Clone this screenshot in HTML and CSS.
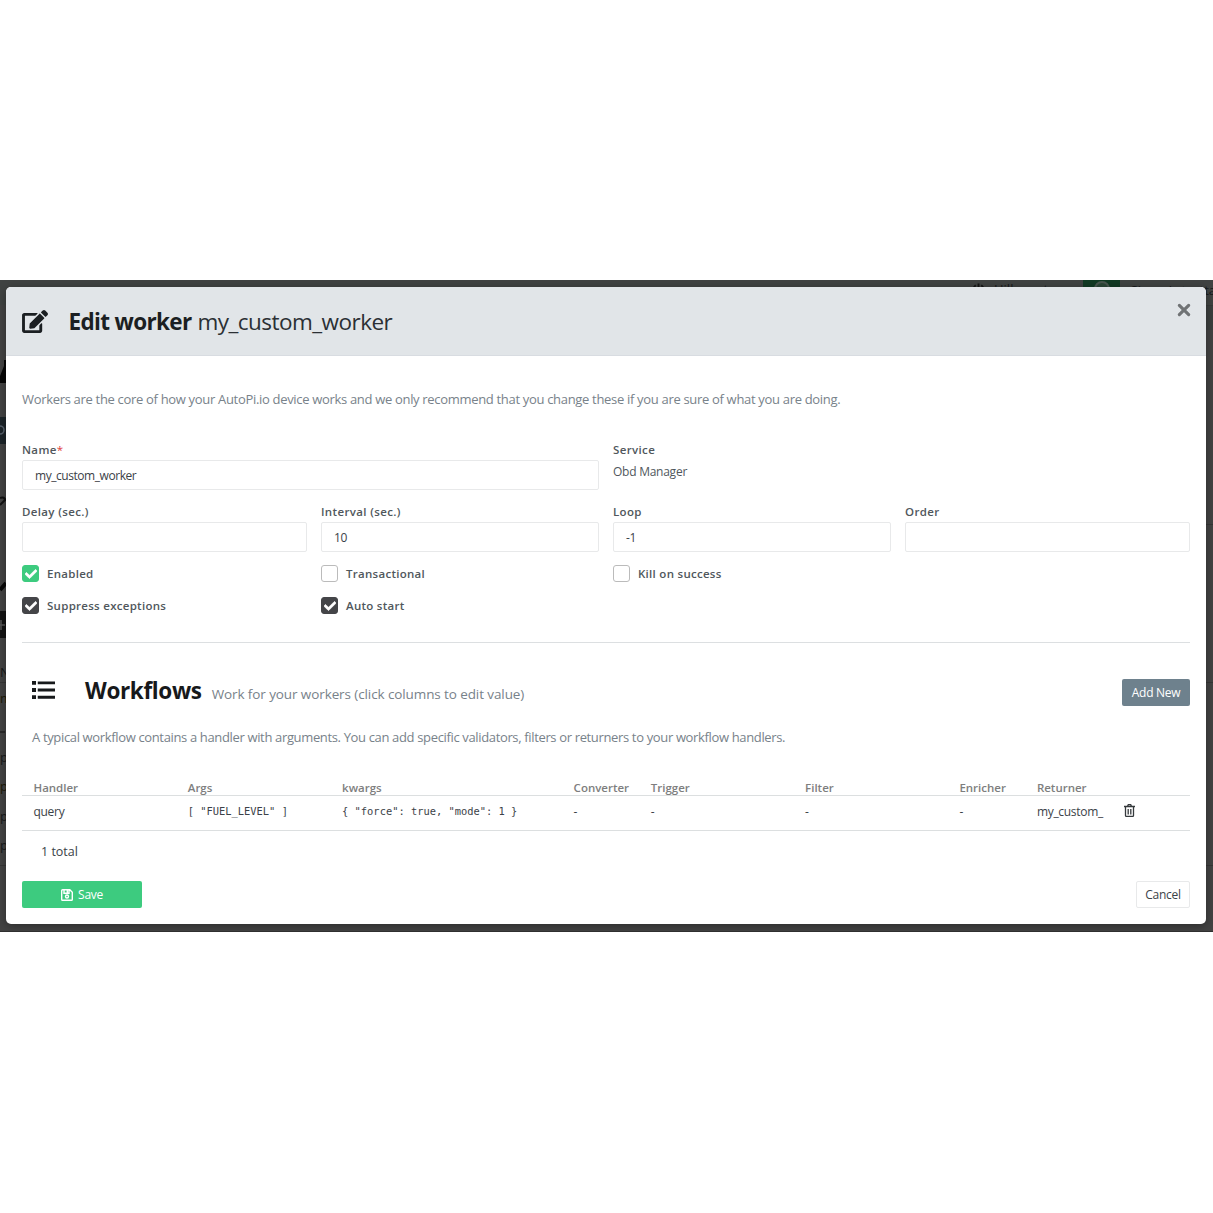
FILE: index.html
```html
<!DOCTYPE html>
<html lang="en">
<head>
<meta charset="utf-8">
<title>Edit worker</title>
<link rel="stylesheet" href="styles.css">
</head>
<body>
<div class="screen">
  <div class="backdrop" aria-hidden="true">
    <div class="bg-top"></div>
    <div class="bg-strip"></div>
    <svg class="bg-power" viewBox="0 0 14 14"><path d="M4 2.5a5.3 5.3 0 1 0 6 0M7 0.5v6" fill="none" stroke="currentColor" stroke-width="2"/></svg>
    <span class="bg-text bg-user">Hilkemet</span>
    <div class="bg-avatar"><i></i></div>
    <span class="bg-text bg-device">Simon's testta</span>
    <div class="bg-line bg-line-1"></div>
    <div class="bg-line bg-line-2"></div>
    <div class="bg-line bg-line-3"></div>
    <svg class="bg-left" viewBox="0 0 6 652">
      <path d="M6 80v23H0v-7l4-10V80z" fill="#050505"/>
      <path d="M0 137h6v27H0z" fill="#1c2429"/>
      <circle cx="0" cy="150" r="4" fill="none" stroke="#56606a" stroke-width="1.6"/>
      <path d="M0 218q4-2 6 3M0 225l5-5" fill="none" stroke="#111" stroke-width="2"/>
      <path d="M0 310l6-7" stroke="#080808" stroke-width="4"/>
      <path d="M0 331h6v27H0z" fill="#131313"/>
      <path d="M0 345h5M1 340v10" stroke="#555" stroke-width="1.5"/>
      <path d="M0 452h5" stroke="#111"/>
    </svg>
    <span class="bg-text bg-l1">N</span>
    <span class="bg-text bg-l2">m</span>
    <span class="bg-text bg-l3">p</span>
    <span class="bg-text bg-l4">p</span>
    <span class="bg-text bg-l5">p</span>
    <span class="bg-text bg-l6">p</span>
  </div>
  <div class="modal" role="dialog">
    <header class="modal-head">
      <svg class="icon-edit" viewBox="0 0 576 512"><path fill="currentColor" d="M402.600 83.200l90.200 90.200c3.800 3.800 3.800 10 0 13.800L274.400 405.600l-92.800 10.300c-12.400 1.400-22.900-9.100-21.500-21.500l10.300-92.800L388.800 83.200c3.800-3.800 10-3.800 13.800 0zm162-22.900l-48.800-48.800c-15.200-15.200-39.900-15.200-55.200 0l-35.400 35.400c-3.800 3.800-3.800 10 0 13.800l90.200 90.200c3.800 3.800 10 3.800 13.800 0l35.400-35.400c15.200-15.300 15.200-40 0-55.200zM384 346.200V448H64V128h229.800c3.200 0 6.200-1.300 8.500-3.500l40-40c7.600-7.600 2.200-20.500-8.500-20.500H48C21.500 64 0 85.500 0 112v352c0 26.500 21.500 48 48 48h352c26.500 0 48-21.500 48-48V306.200c0-10.700-12.900-16-20.500-8.500l-40 40c-2.200 2.300-3.500 5.300-3.500 8.500z"/></svg>
      <h1 class="title"><b>Edit worker</b> <span>my_custom_worker</span></h1>
      <svg class="icon-close" viewBox="0 0 12 12"><path d="M2 2l8 8M10 2l-8 8" stroke="currentColor" stroke-width="2.700" stroke-linecap="round"/></svg>
    </header>
    <div class="modal-body">
      <p class="intro">Workers are the core of how your AutoPi.io device works and we only recommend that you change these if you are sure of what you are doing.</p>
      <div class="form">
        <div class="field wide"><label class="label">Name<em>*</em></label><div class="input">my_custom_worker</div></div>
        <div class="field wide"><span class="label">Service</span><span class="static">Obd Manager</span></div>
        <div class="field"><label class="label">Delay (sec.)</label><div class="input"></div></div>
        <div class="field"><label class="label">Interval (sec.)</label><div class="input">10</div></div>
        <div class="field"><label class="label">Loop</label><div class="input">-1</div></div>
        <div class="field"><label class="label">Order</label><div class="input"></div></div>
      </div>
      <div class="checks">
        <label class="check"><span class="box green"><svg viewBox="0 0 512 512"><path fill="#fff" stroke="#fff" stroke-width="24" d="M173.900 439.400l-166.400-166.400c-10-10-10-26.200 0-36.200l36.200-36.200c10-10 26.200-10 36.200 0L192 312.700 432.100 72.600c10-10 26.200-10 36.200 0l36.200 36.200c10 10 10 26.200 0 36.200l-294.400 294.400c-10 10-26.200 10-36.200 0z"/></svg></span>Enabled</label>
        <label class="check"><span class="box"></span>Transactional</label>
        <label class="check"><span class="box"></span>Kill on success</label>
        <span></span>
        <label class="check"><span class="box dark"><svg viewBox="0 0 512 512"><path fill="#fff" stroke="#fff" stroke-width="24" d="M173.900 439.400l-166.400-166.400c-10-10-10-26.200 0-36.200l36.200-36.200c10-10 26.200-10 36.200 0L192 312.700 432.100 72.600c10-10 26.200-10 36.200 0l36.200 36.200c10 10 10 26.200 0 36.200l-294.400 294.400c-10 10-26.200 10-36.200 0z"/></svg></span>Suppress exceptions</label>
        <label class="check"><span class="box dark"><svg viewBox="0 0 512 512"><path fill="#fff" stroke="#fff" stroke-width="24" d="M173.900 439.400l-166.400-166.400c-10-10-10-26.200 0-36.200l36.200-36.200c10-10 26.200-10 36.200 0L192 312.700 432.100 72.600c10-10 26.200-10 36.200 0l36.200 36.200c10 10 10 26.200 0 36.200l-294.400 294.400c-10 10-26.200 10-36.200 0z"/></svg></span>Auto start</label>
      </div>
      <section class="flows">
        <div class="flows-head">
          <svg class="icon-list" viewBox="0 0 24 20"><path fill="currentColor" d="M0 .5h4.200v4H0zM0 8h4.200v4H0zM0 15.500h4.200v4H0zM6 1h18v3H6zM6 8.500h18v3H6zM6 16h18v3H6z"/></svg>
          <h2 class="flows-title">Workflows</h2>
          <span class="flows-sub">Work for your workers (click columns to edit value)</span>
          <button class="btn btn-add"><span>Add New</span></button>
        </div>
        <p class="flows-text">A typical workflow contains a handler with arguments. You can add specific validators, filters or returners to your workflow handlers.</p>
        <div class="row row-head"><span>Handler</span><span>Args</span><span>kwargs</span><span>Converter</span><span>Trigger</span><span>Filter</span><span>Enricher</span><span>Returner</span></div>
        <div class="row row-data"><span>query</span><code>[ "FUEL_LEVEL" ]</code><code>{ "force": true, "mode": 1 }</code><span>-</span><span>-</span><span>-</span><span>-</span><span>my_custom_</span><svg class="icon-trash" viewBox="0 0 11 13"><path d="M0 2.500h11M3.500 2.300l.8-1.600h2.400l.8 1.600M1.500 3v8.500q0 .9.9.9h6.200q.9 0 .9-.9V3M4.200 5v5.500M6.800 5v5.500" fill="none" stroke="currentColor" stroke-width="1.300"/></svg></div>
        <div class="total">1 total</div>
      </section>
      <footer class="actions">
        <button class="btn btn-save"><svg class="icon-save" viewBox="0 0 12 12"><path d="M1.600.7h7.200l2.500 2.500v7.200q0 .9-.9.900H1.600q-.9 0-.9-.9V1.600q0-.9.9-.9zM3 1v3.200h5V1M6.300 1.500v2" fill="none" stroke="currentColor" stroke-width="1.400"/><circle cx="6" cy="7.500" r="1.500" fill="none" stroke="currentColor" stroke-width="1.400"/></svg><span>Save</span></button>
        <button class="btn btn-cancel"><span>Cancel</span></button>
      </footer>
    </div>
  </div>
</div>
</body>
</html>
```
FILE: styles.css
```css
* { box-sizing: border-box; }
body {
  margin: 0;
  padding-top: 280px;
  height: 1213px;
  overflow: hidden;
  background: #fff;
  color: #3b4248;
  font-family: "Open Sans", "Noto Sans", sans-serif;
  font-size: 12px;
}
h1, h2, p { margin: 0; }
button { font: inherit; cursor: pointer; }

.screen {
  position: relative;
  height: 652px;
  padding: 7px 7px 8px 6px;
  background: #434343;
  border-bottom: 1px solid #2f2f2f;
  overflow: hidden;
}

/* dimmed page behind the dialog */
.backdrop { position: absolute; inset: 0; overflow: hidden; color: #151515; }
.backdrop > * { position: absolute; }
.bg-top { left: 0; right: 0; top: 0; height: 25px; background: #404342; }
.bg-strip { right: 0; top: 25px; width: 8px; height: 25px; background: #3b3f3e; border-top: 1px solid #373a39; }
.bg-power { left: 972px; top: 3px; width: 13px; height: 13px; }
.bg-text { font-size: 13px; line-height: 16px; white-space: nowrap; color: #17191a; }
.bg-user { left: 994px; top: 1px; }
.bg-avatar { left: 1083px; top: 0; width: 37px; height: 30px; background: #113a23; }
.bg-avatar i { position: absolute; left: 11px; top: 1px; width: 16px; height: 16px; border-radius: 50%; border: 2px solid #48574f; background: #2b4737; }
.bg-device { right: -3px; top: 2px; letter-spacing: 0; }
.bg-line { left: 0; right: 0; height: 1px; background: #363636; }
.bg-line-1 { top: 244px; left: 1206px; }
.bg-line-2 { top: 402px; }
.bg-line-3 { top: 585px; }
.bg-left { left: 0; top: 0; width: 6px; height: 652px; }
.bg-l1 { left: 0; top: 384px; }
.bg-l2 { left: 0; top: 410px; color: #1d1a08; }
.bg-l3 { left: 0; top: 469px; }
.bg-l4 { left: 0; top: 498px; color: #1d1a08; }
.bg-l5 { left: 0; top: 528px; }
.bg-l6 { left: 0; top: 557px; }

.modal {
  position: relative;
  height: 637px;
  width: 1200px;
  background: #fff;
  border-radius: 5px;
  overflow: hidden;
  box-shadow: 0 2px 10px rgba(0, 0, 0, .35);
}
.modal-head {
  display: flex;
  align-items: flex-start;
  height: 69px;
  padding: 0 16px;
  background: #e1e5e8;
  border-bottom: 1px solid #d8dce1;
  color: #1b1f22;
}
.icon-edit { width: 26px; height: 23px; margin-top: 23px; }
.title { margin: 19px auto 0 20.500px; font-size: 22.500px; line-height: 32px; font-weight: 400; white-space: nowrap; }
.title b { font-weight: 700; letter-spacing: -.65px; }
.title span { letter-spacing: -.53px; color: #2b3034; }
.icon-close { width: 14px; height: 14px; margin: 16px -1px 0 0; color: #707375; }

.modal-body { padding: 0 16px; }
.intro { margin-top: 34px; font-size: 13px; line-height: 18px; letter-spacing: -.317px; color: #78828a; white-space: nowrap; }

.form { display: grid; grid-template-columns: 285px 278px 278px 285px; gap: 14px; margin-top: 34px; }
.field { display: flex; flex-direction: column; height: 48px; }
.wide { grid-column: span 2; }
.label { height: 18px; font-size: 11.500px; line-height: 16px; font-weight: 600; letter-spacing: .36px; color: #50575c; }
.label em { font-style: normal; font-weight: 400; color: #e03c3c; }
.input { height: 30px; padding: 0 12px; border: 1px solid #e8e9ea; border-radius: 2px; font-size: 12px; line-height: 30px; letter-spacing: -.45px; }
.static { font-size: 12px; line-height: 24px; letter-spacing: -.25px; color: #50575d; }

.checks { display: grid; grid-template-columns: 285px 278px 278px 285px; column-gap: 14px; row-gap: 15px; margin-top: 13px; }
.check { display: flex; align-items: center; height: 17px; gap: 8px; font-size: 11.500px; line-height: 17px; font-weight: 600; letter-spacing: .28px; color: #50575c; }
.box { display: flex; align-items: center; justify-content: center; width: 17px; height: 17px; border: 1px solid #bbb; border-radius: 3px; }
.box svg { width: 12px; height: 12px; }
.green { background: #3dcb7f; border-color: #3dcb7f; }
.dark { background: #444548; border-color: #444548; }

.flows { margin-top: 28px; border-top: 1px solid #dcdfe1; }
.flows-head { display: flex; align-items: baseline; height: 27px; margin-top: 36px; padding-left: 10px; }
.icon-list { width: 23px; height: 20px; align-self: flex-start; margin-top: 1px; color: #17191b; }
.flows-title { margin-left: 30px; font-size: 22.500px; line-height: 23px; font-weight: 700; letter-spacing: -.35px; color: #17191b; }
.flows-sub { margin: 0 auto 0 10px; font-size: 13.500px; line-height: 18px; letter-spacing: -.1px; color: #78828a; white-space: nowrap; }
.btn { display: flex; align-items: center; justify-content: center; height: 27px; padding: 0; border: 0; border-radius: 2px; font-size: 12px; letter-spacing: -.3px; color: #fff; }
.btn-add { align-self: flex-start; width: 68px; background: #6e818d; }
.flows-text { margin: 22px 0 0 10px; font-size: 13px; line-height: 18px; letter-spacing: -.35px; color: #78828a; white-space: nowrap; }
.row { display: grid; grid-template-columns: 154.300px 154.300px 231.500px 77.200px 154.300px 154.300px 77.500px 87px 1fr; padding-left: 11.500px; border-bottom: 1px solid #dcdfe0; white-space: nowrap; }
.row-head { height: 17px; margin-top: 33px; font-size: 11.500px; line-height: 17px; font-weight: 600; color: #7e7e7e; }
.row-data { height: 35px; font-size: 12px; line-height: 31px; letter-spacing: -.3px; }
.row-data code { font-family: "DejaVu Sans Mono", "Liberation Mono", monospace; font-size: 10.400px; letter-spacing: 0; }
.icon-trash { width: 11px; height: 13px; margin-top: 8px; color: #35393c; }
.total { margin-top: 12px; padding-left: 19px; font-size: 12.500px; line-height: 18px; }

.actions { display: flex; justify-content: space-between; margin-top: 20px; }
.btn-save { width: 120px; gap: 5px; background: #3dcb7f; }
.icon-save { width: 12px; height: 12px; }
.btn-cancel { width: 54px; background: #fff; border: 1px solid #e8e9ea; color: #3b4248; }
```
